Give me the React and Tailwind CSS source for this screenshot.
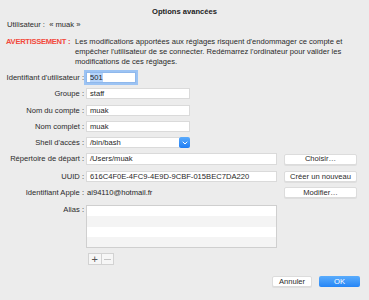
import { ChevronDown } from "lucide-react";

const Field = ({ value, w = "w-[104px]", focus = false }) => (
  <div
    className={`${w} h-[11px] bg-white flex items-center px-[3px] text-[#1f1f1f] ${
      focus
        ? "border border-[#8fb8ec] ring-2 ring-[#9cc3f3]"
        : "border border-[#dadada]"
    }`}
  >
    {focus ? <span className="bg-[#b5d4fb] leading-[9px]">{value}</span> : value}
  </div>
);

const Row = ({ label, children, className = "" }) => (
  <div className={`flex items-center ${className}`}>
    <div className="w-[86px] pr-[2px] text-right text-[#2a2a2a] whitespace-nowrap">{label}</div>
    {children}
  </div>
);

const MacButton = ({ children, className = "" }) => (
  <div
    className={`h-[11px] bg-white border border-[#dcdcdc] rounded-[2px] flex items-center justify-center text-[#2a2a2a] shadow-[0_1px_0_rgba(0,0,0,0.06)] ${className}`}
  >
    {children}
  </div>
);

export default function App() {
  return (
    <div
      className="w-[369px] h-[300px] bg-[#ececec] text-[7.6px] leading-[10px] overflow-hidden flex flex-col"
      style={{ fontFamily: '"Liberation Sans", Arial, sans-serif' }}
    >
      <div className="text-center font-bold text-[#1c1c1c] mt-[7px]">Options avancées</div>
      <div className="ml-[7px] mt-[3px] text-[#2a2a2a]">Utilisateur : &nbsp;« muak »</div>

      <div className="flex mt-[7px]">
        <div className="w-[69px] ml-[6px] font-bold text-[#f24a3c] whitespace-nowrap tracking-[-0.3px]">
          AVERTISSEMENT :
        </div>
        <div className="text-[#2a2a2a] whitespace-nowrap">
          Les modifications apportées aux réglages risquent d'endommager ce compte et
          <br />
          empêcher l'utilisateur de se connecter. Redémarrez l'ordinateur pour valider les
          <br />
          modifications de ces réglages.
        </div>
      </div>

      <div className="flex flex-col mt-[5px]">
        <Row label="Identifiant d'utilisateur :">
          <Field value="501" w="w-[50px]" focus />
        </Row>
        <Row label="Groupe :" className="mt-[5px]">
          <Field value="staff" />
        </Row>
        <Row label="Nom du compte :" className="mt-[6px]">
          <Field value="muak" />
        </Row>
        <Row label="Nom complet :" className="mt-[5px]">
          <Field value="muak" />
        </Row>
        <Row label="Shell d'accès :" className="mt-[5px]">
          <div className="w-[104px] h-[11px] flex">
            <div className="flex-1 bg-white border border-[#dadada] border-r-0 flex items-center px-[3px] text-[#1f1f1f]">
              /bin/bash
            </div>
            <div className="w-[11px] h-[11px] rounded-[2px] bg-gradient-to-b from-[#5aabfc] to-[#1b7cf4] flex items-center justify-center">
              <ChevronDown className="w-[8px] h-[8px] text-white" strokeWidth={3} />
            </div>
          </div>
        </Row>
        <Row label="Répertoire de départ :" className="mt-[5px]">
          <Field value="/Users/muak" w="w-[191px] h-[12px]" />
          <MacButton className="w-[73px] ml-[7px]">Choisir…</MacButton>
        </Row>
        <Row label="UUID :" className="mt-[6px]">
          <Field value="616C4F0E-4FC9-4E9D-9CBF-015BEC7DA220" w="w-[191px]" />
          <MacButton className="w-[73px] ml-[7px]">Créer un nouveau</MacButton>
        </Row>
        <Row label="Identifiant Apple :" className="mt-[5px]">
          <div className="w-[191px] h-[11px] flex items-center pl-[1px] text-[#1f1f1f]">ai94110@hotmail.fr</div>
          <MacButton className="w-[73px] ml-[7px]">Modifier…</MacButton>
        </Row>
        <Row label="Alias :" className="items-start mt-[7px]">
          <div className="w-[191px] h-[43px] border border-[#cfcfcf] flex flex-col">
            <div className="h-[10.5px] bg-white" />
            <div className="h-[10.5px] bg-[#f4f4f4]" />
            <div className="h-[10.5px] bg-white" />
            <div className="h-[10.5px] bg-[#f4f4f4]" />
          </div>
        </Row>
      </div>

      <div className="ml-[88px] mt-[5px] flex w-[26px] h-[12px] border border-[#d2d2d2] bg-[#f6f6f6]">
        <div className="flex-1 flex items-center justify-center text-[#555] text-[11px] leading-none border-r border-[#d2d2d2]">+</div>
        <div className="flex-1 flex items-center justify-center">
          <div className="w-[7px] h-px bg-[#c4c4c4]" />
        </div>
      </div>

      <div className="flex justify-end gap-[7px] mr-[9px] mt-[11px]">
        <MacButton className="w-[40px]">Annuler</MacButton>
        <div className="w-[41px] h-[11px] rounded-[2px] bg-gradient-to-b from-[#5aacfc] to-[#2385f6] flex items-center justify-center text-white">
          OK
        </div>
      </div>
    </div>
  );
}
